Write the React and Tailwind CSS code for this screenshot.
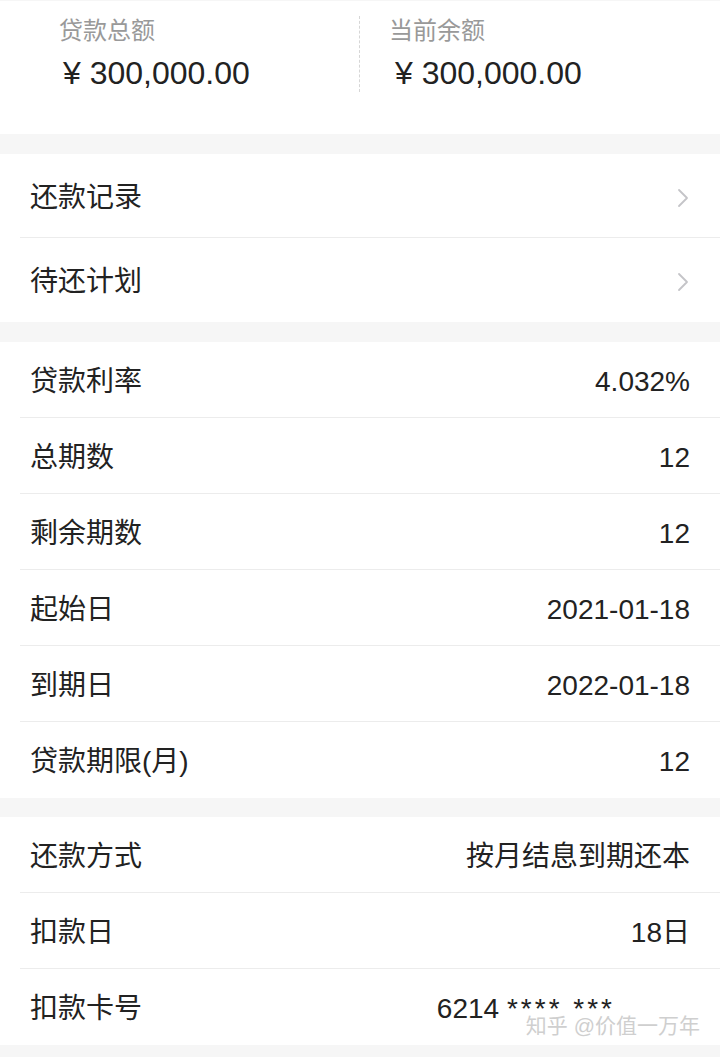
import React from 'react'

const font = { fontFamily: '"Liberation Sans", "Noto Sans CJK SC", sans-serif' }

const links = ['还款记录', '待还计划']

const details = [
  ['贷款利率', '4.032%'],
  ['总期数', '12'],
  ['剩余期数', '12'],
  ['起始日', '2021-01-18'],
  ['到期日', '2022-01-18'],
  ['贷款期限(月)', '12'],
]

function Chevron() {
  return (
    <svg width="12" height="20" viewBox="0 0 12 20" fill="none" className="mr-[1px]">
      <path d="M2 2l8 8-8 8" stroke="#c4c4c8" strokeWidth="1.8" strokeLinecap="round" strokeLinejoin="round" />
    </svg>
  )
}

function Row({ label, children, last, h = 'h-[76px]' }) {
  return (
    <div className="pl-[20px]">
      <div className={`flex items-center justify-between ${h} pl-[10px] pr-[30px] pt-[4px] ${last ? '' : 'border-b border-[#ececec]'}`}>
        <span className="text-[28px] text-[#222]">{label}</span>
        {children}
      </div>
    </div>
  )
}

export default function App() {
  return (
    <div className="w-[720px] h-[1057px] overflow-hidden bg-[#f6f6f6]" style={font}>
      {/* Amount summary */}
      <div className="mt-[1px] bg-white h-[133px] flex pt-[15px]">
        <div className="w-[360px] pl-[59px] border-r border-dashed border-[#d6d6d6] h-[76px]">
          <div className="text-[24px] leading-[30px] text-[#999]">贷款总额</div>
          <div className="text-[32px] leading-[40px] mt-[7px] text-[#222] pl-[4px]">¥ 300,000.00</div>
        </div>
        <div className="pl-[29px]">
          <div className="text-[24px] leading-[30px] text-[#999]">当前余额</div>
          <div className="text-[32px] leading-[40px] mt-[7px] text-[#222] pl-[6px]">¥ 300,000.00</div>
        </div>
      </div>

      {/* Links */}
      <div className="mt-[20px] bg-white">
        {links.map((l, i) => (
          <Row key={l} label={l} last={i === links.length - 1} h="h-[84px]">
            <Chevron />
          </Row>
        ))}
      </div>

      {/* Loan details */}
      <div className="mt-[20px] bg-white">
        {details.map(([k, v], i) => (
          <Row key={k} label={k} last={i === details.length - 1}>
            <span className="text-[28px] text-[#222]">{v}</span>
          </Row>
        ))}
      </div>

      {/* Repayment */}
      <div className="mt-[19px] bg-white">
        <Row label="还款方式">
          <span className="text-[28px] text-[#222]">按月结息到期还本</span>
        </Row>
        <Row label="扣款日">
          <span className="text-[28px] text-[#222]">18日</span>
        </Row>
        <Row label="扣款卡号" last>
          <div className="relative">
            <span className="text-[28px] text-[#222] mr-[75px]">
              6214 <span className="tracking-[3px]">**** ***</span>
            </span>
            <span className="absolute right-[-10px] top-[26px] text-[21px] leading-[24px] text-[#cfcfcf] whitespace-nowrap">
              知乎 @价值一万年
            </span>
          </div>
        </Row>
      </div>
    </div>
  )
}
